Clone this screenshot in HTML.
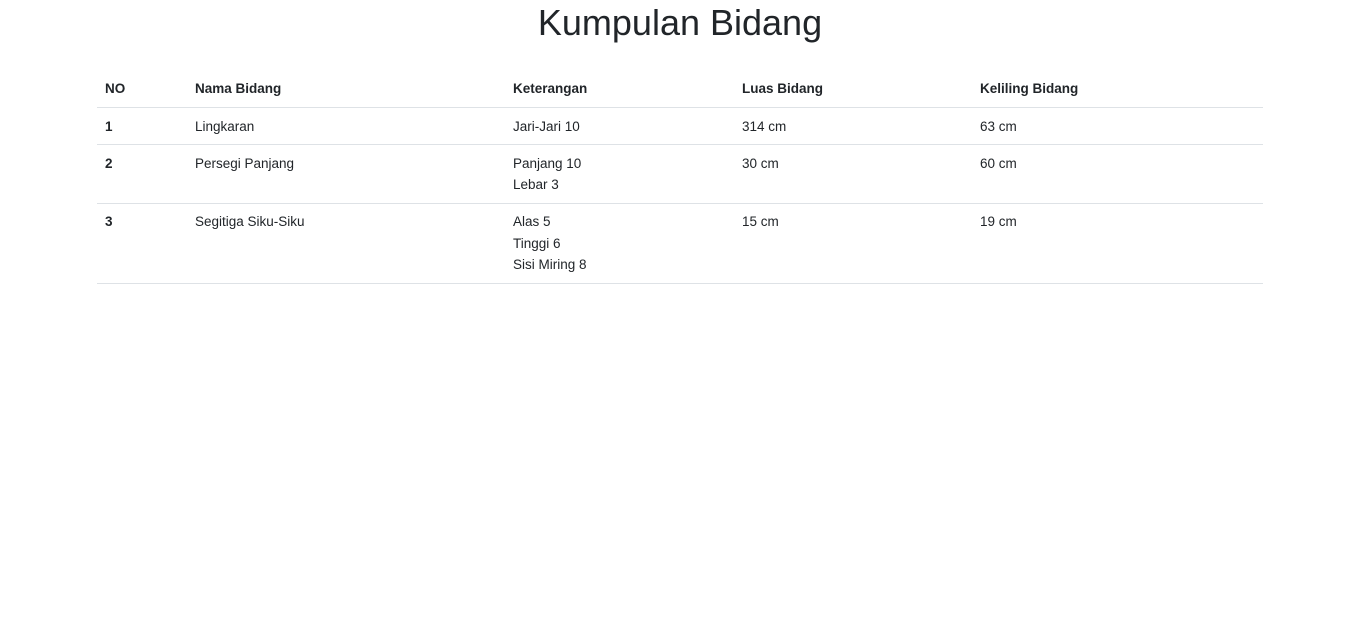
<!DOCTYPE html>
<html><head><meta charset="utf-8"><style>
body{margin:0;background:#fff;color:#212529;font-family:"Liberation Sans",sans-serif;}
h1{margin:0;text-align:center;font-weight:500;font-size:36px;line-height:44px;padding-top:1px;}
table{position:absolute;left:97px;top:71px;width:1166px;border-collapse:collapse;font-size:13.5px;line-height:21.4px;}
th,td{text-align:left;vertical-align:top;padding:7.4px 8px;border-bottom:1px solid #dee2e6;}
th{font-weight:bold;}
td:first-child{font-weight:bold;}
</style></head><body>
<h1>Kumpulan Bidang</h1>
<table>
<colgroup><col style="width:90px"><col style="width:318px"><col style="width:229px"><col style="width:238px"><col></colgroup>
<tr><th>NO</th><th>Nama Bidang</th><th>Keterangan</th><th>Luas Bidang</th><th>Keliling Bidang</th></tr>
<tr><td>1</td><td>Lingkaran</td><td>Jari-Jari 10</td><td>314 cm</td><td>63 cm</td></tr>
<tr><td>2</td><td>Persegi Panjang</td><td>Panjang 10<br>Lebar 3</td><td>30 cm</td><td>60 cm</td></tr>
<tr><td>3</td><td>Segitiga Siku-Siku</td><td>Alas 5<br>Tinggi 6<br>Sisi Miring 8</td><td>15 cm</td><td>19 cm</td></tr>
</table>
</body></html>
